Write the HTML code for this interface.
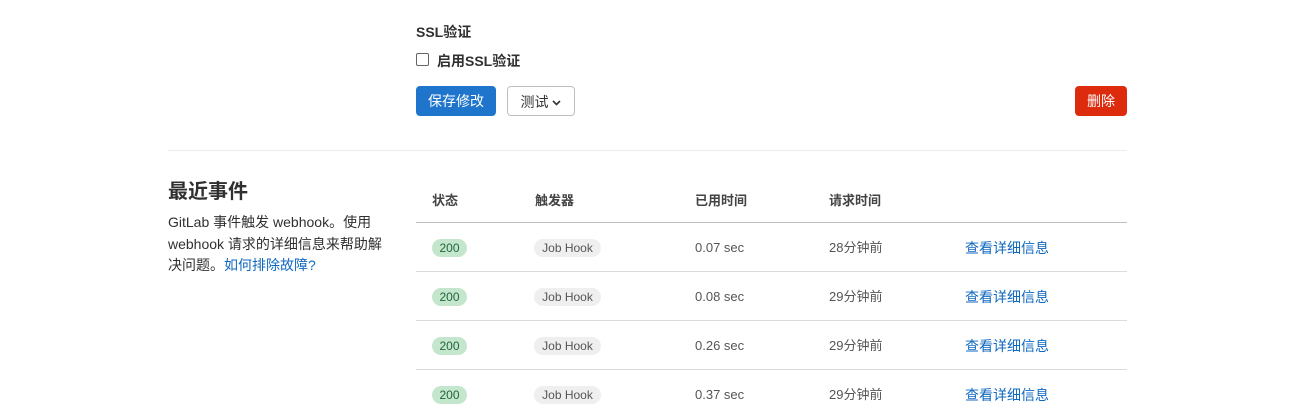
<!DOCTYPE html><html><head><meta charset="utf-8"><style>
body{margin:0;width:1291px;height:415px;overflow:hidden;background:#fff;font-family:"Liberation Sans","Noto Sans CJK SC",sans-serif;color:#303030;font-size:14px;position:relative}
.a{position:absolute;white-space:nowrap}
.btn{position:absolute;height:30px;border-radius:4px;box-sizing:border-box;font-size:14px;line-height:30px;text-align:center}
.row{position:absolute;left:416px;width:711px;height:49px;border-top:1px solid #dbdbdb}
.row span{position:absolute;top:16px;font-size:13px;line-height:18px;color:#555}
.b200{left:16px;background:#c3e6cd;color:#24663b!important;border-radius:9px;width:35px;text-align:center;font-size:12px!important}
.jh{left:118px;background:#efefef;color:#555;border-radius:9px;width:67px;text-align:center;font-size:12px!important}
.lk{color:#1068bf!important;left:549px;font-size:14px!important}
</style></head><body>
<div class="a" style="left:416px;top:22px;font-weight:bold;font-size:14px">SSL验证</div>
<div class="a" style="left:416px;top:53px;width:13px;height:13px;border:1px solid #666;border-radius:2px;box-sizing:border-box"></div>
<div class="a" style="left:437px;top:51px;font-weight:bold">启用SSL验证</div>
<div class="btn" style="left:416px;top:86px;width:80px;background:#1f75cb;color:#fff">保存修改</div>
<div class="btn" style="left:507px;top:86px;width:68px;border:1px solid #bfbfbf;color:#333">测试 <svg width="9" height="6" viewBox="0 0 9 6" style="vertical-align:1px"><path d="M1 1l3.5 3.5L8 1" fill="none" stroke="#333" stroke-width="1.6"/></svg></div>
<div class="btn" style="left:1075px;top:86px;width:52px;background:#dd2b0e;color:#fff">删除</div>
<div class="a" style="left:168px;top:150px;width:959px;border-top:1px solid #ececec"></div>
<div class="a" style="left:168px;top:175px;font-size:20px;font-weight:bold">最近事件</div>
<div class="a" style="left:168px;top:212px;font-size:14px;line-height:21.5px">GitLab 事件触发 webhook。使用<br>webhook 请求的详细信息来帮助解<br>决问题。<span style="color:#1068bf">如何排除故障?</span></div>
<div class="a" style="left:432px;top:190px;font-weight:bold;font-size:13px;color:#444">状态</div>
<div class="a" style="left:535px;top:190px;font-weight:bold;font-size:13px;color:#444">触发器</div>
<div class="a" style="left:695px;top:190px;font-weight:bold;font-size:13px;color:#444">已用时间</div>
<div class="a" style="left:829px;top:190px;font-weight:bold;font-size:13px;color:#444">请求时间</div>
<div class="row" style="top:222px;border-top-color:#bfbfbf"><span class="b200">200</span><span class="jh">Job Hook</span><span style="left:279px">0.07 sec</span><span style="left:413px">28分钟前</span><span class="lk">查看详细信息</span></div>
<div class="row" style="top:271px"><span class="b200">200</span><span class="jh">Job Hook</span><span style="left:279px">0.08 sec</span><span style="left:413px">29分钟前</span><span class="lk">查看详细信息</span></div>
<div class="row" style="top:320px"><span class="b200">200</span><span class="jh">Job Hook</span><span style="left:279px">0.26 sec</span><span style="left:413px">29分钟前</span><span class="lk">查看详细信息</span></div>
<div class="row" style="top:369px"><span class="b200">200</span><span class="jh">Job Hook</span><span style="left:279px">0.37 sec</span><span style="left:413px">29分钟前</span><span class="lk">查看详细信息</span></div>
</body></html>
